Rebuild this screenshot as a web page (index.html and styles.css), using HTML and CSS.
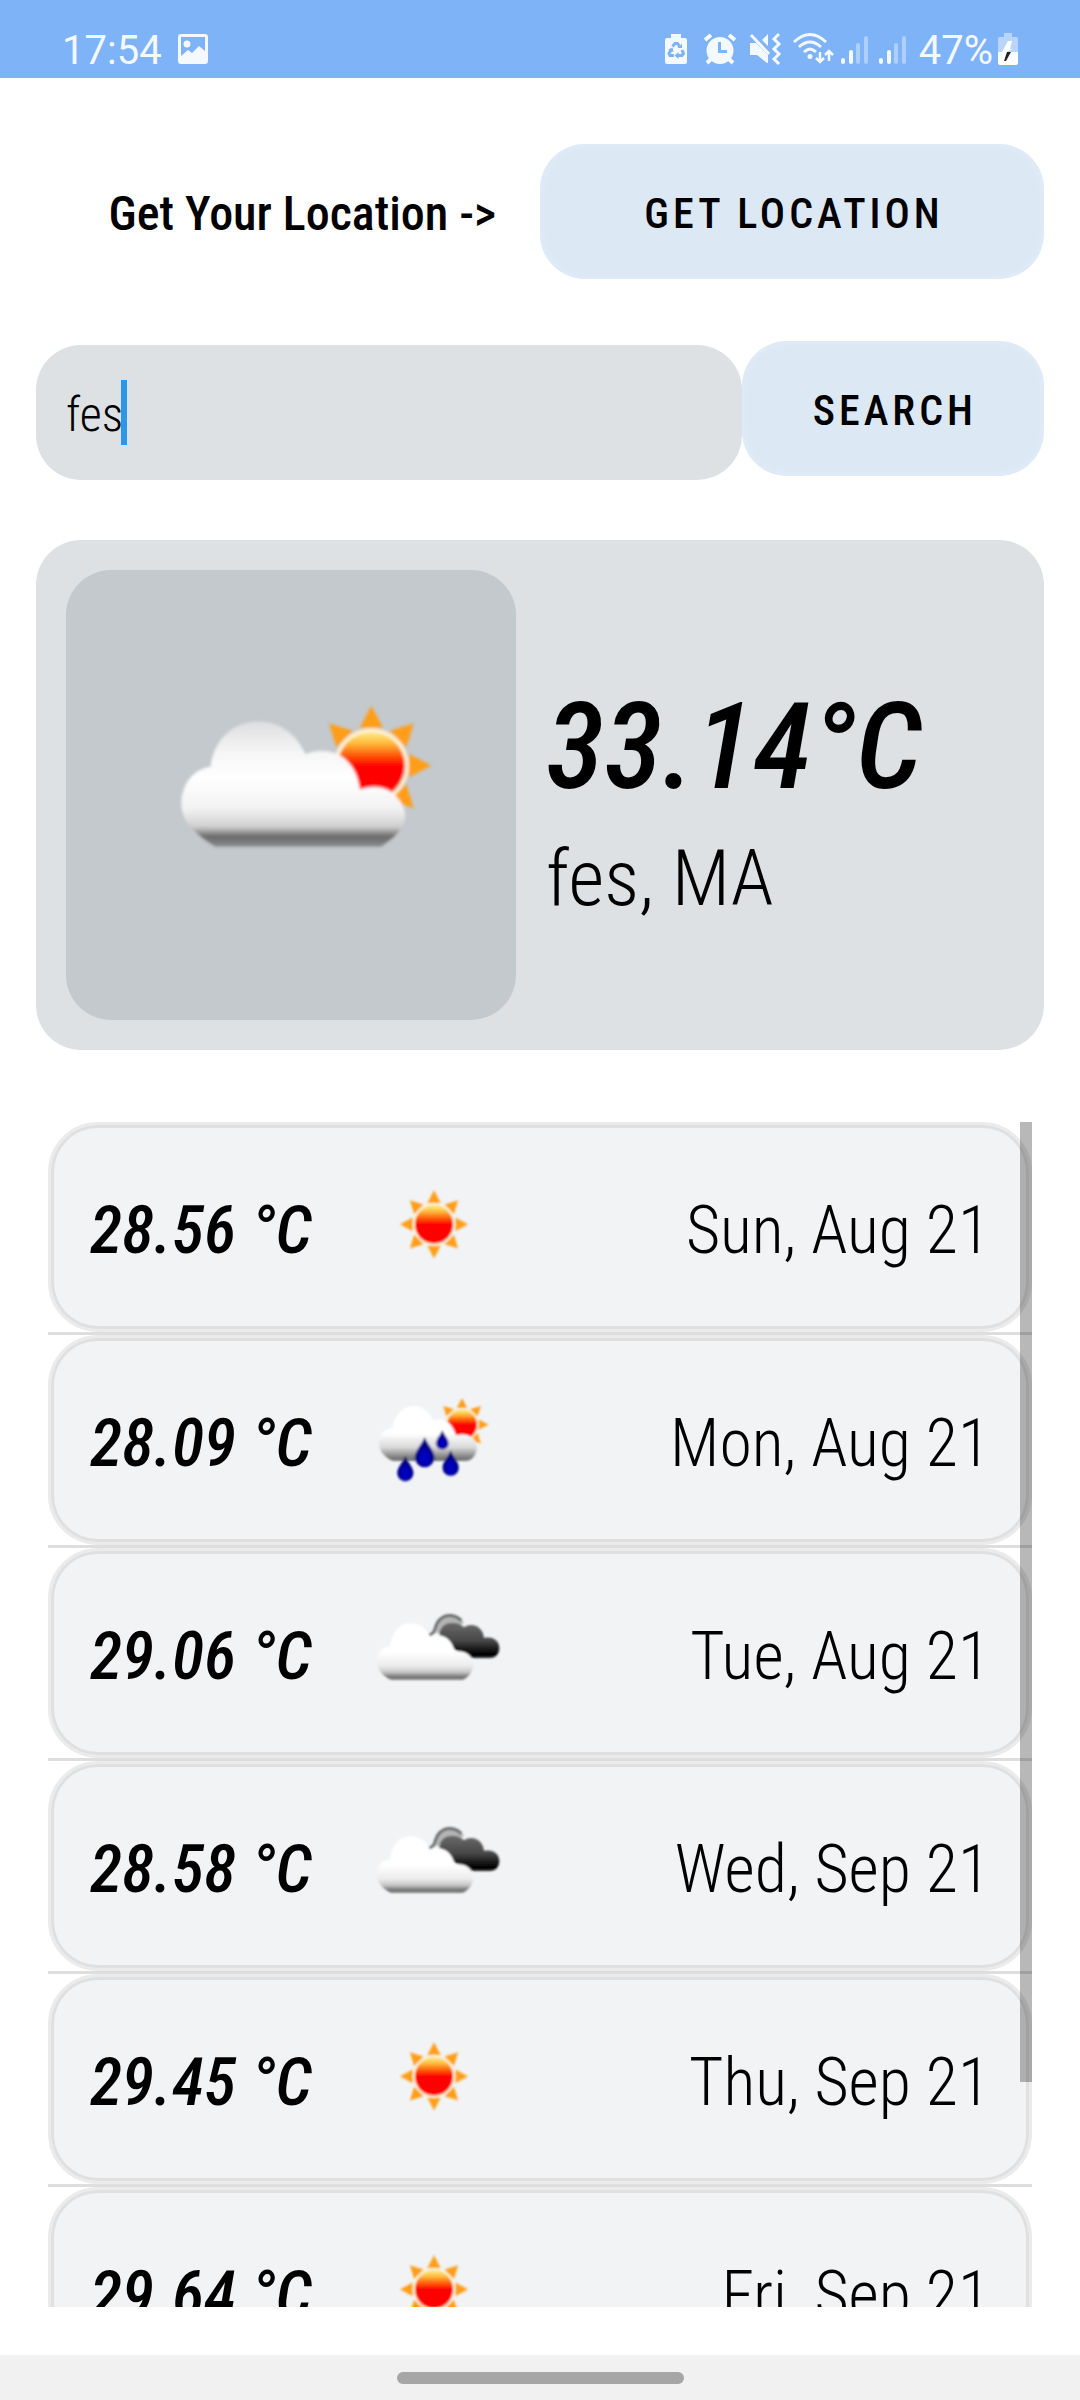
FILE: index.html
```html
<!DOCTYPE html>
<html lang="en">
<head>
<meta charset="utf-8">
<meta name="viewport" content="width=device-width, initial-scale=1">
<title>Weather</title>
<link rel="stylesheet" href="styles.css">
</head>
<body>
<svg class="defs" aria-hidden="true">
  <defs>
    <linearGradient id="disc" x1="0" y1="0" x2="0" y2="1">
      <stop offset="0" stop-color="#ffe98a"/><stop offset=".15" stop-color="#ffc040"/><stop offset=".38" stop-color="#ff4800"/><stop offset=".5" stop-color="#f00"/><stop offset="1" stop-color="#f00"/>
    </linearGradient>
    <linearGradient id="cloud" x1="0" y1="0" x2="0" y2="1">
      <stop offset="0" stop-color="#dedee0"/><stop offset=".25" stop-color="#f6f6f6"/><stop offset=".45" stop-color="#fff"/><stop offset=".7" stop-color="#f2f2f2"/><stop offset=".84" stop-color="#cfcfcf"/><stop offset=".92" stop-color="#6a6a6a"/><stop offset="1" stop-color="#8c8c8c"/>
    </linearGradient>
    <linearGradient id="small-cloud" x1="0" y1="0" x2="0" y2="1">
      <stop offset="0" stop-color="#fff"/><stop offset=".5" stop-color="#fff"/><stop offset=".75" stop-color="#dadada"/><stop offset=".95" stop-color="#777"/><stop offset="1" stop-color="#777"/>
    </linearGradient>
    <linearGradient id="pale-cloud" x1="0" y1="0" x2="0" y2="1">
      <stop offset="0" stop-color="#fff"/><stop offset=".5" stop-color="#fff"/><stop offset=".75" stop-color="#ececec"/><stop offset=".86" stop-color="#c8c8c8"/><stop offset=".95" stop-color="#707070"/><stop offset="1" stop-color="#8c8c8c"/>
    </linearGradient>
    <linearGradient id="dark" x1="0" y1="0" x2="0" y2="1">
      <stop offset="0" stop-color="#6a6a6a"/><stop offset=".5" stop-color="#484848"/><stop offset=".9" stop-color="#000"/><stop offset="1" stop-color="#222"/>
    </linearGradient>
    <radialGradient id="rain" cx=".5" cy=".7" r=".6">
      <stop offset="0" stop-color="#0000d8"/><stop offset="1" stop-color="#00006a"/>
    </radialGradient>
    <filter id="soft"><feGaussianBlur stdDeviation="3"/></filter>
    <filter id="softer"><feGaussianBlur stdDeviation="5"/></filter>
    <g id="sun">
      <g fill="#ff9d14">
        <path id="ray" d="M-20-64L0-102L20-64Z"/>
        <use href="#ray" transform="rotate(45)"/><use href="#ray" transform="rotate(90)"/><use href="#ray" transform="rotate(135)"/><use href="#ray" transform="rotate(180)"/><use href="#ray" transform="rotate(225)"/><use href="#ray" transform="rotate(270)"/><use href="#ray" transform="rotate(315)"/>
      </g>
      <circle r="64" fill="#fff0cf"/>
      <circle r="57" fill="url(#disc)"/>
    </g>
    <path id="drop" fill="url(#rain)" d="M0-46C8-22 29-6 29 16A29 29 0 0 1-29 16C-29-6-8-22 0-46Z"/>
    <symbol id="clear" viewBox="0 0 150 150">
      <g transform="translate(-9 18) scale(.3333)" filter="url(#soft)"><use href="#sun" x="252" y="163"/></g>
    </symbol>
    <symbol id="shower" viewBox="0 0 150 150">
      <g transform="translate(-9 -195) scale(.3333)" filter="url(#soft)">
        <use href="#sun" transform="translate(336 764) scale(.78)"/>
        <path fill="url(#small-cloud)" d="M128 873C102 862 85 840 87 815C89 792 104 778 126 775C136 728 164 708 190 708C217 708 238 726 250 752C276 740 306 752 318 796C345 786 378 800 380 828C382 850 368 873 346 873Z"/>
        <use href="#drop" transform="translate(224 847)"/>
        <use href="#drop" transform="translate(277 810) scale(.64)"/>
        <use href="#drop" transform="translate(166 896) scale(.84)"/>
        <use href="#drop" transform="translate(302 880) scale(.84)"/>
      </g>
    </symbol>
    <symbol id="broken" viewBox="0 0 150 150">
      <g transform="translate(-9 2) scale(.3333)" filter="url(#soft)">
        <path fill="#b4b4b4" d="M258 160C258 126 282 106 302 106C320 106 334 114 342 130L300 150Z"/>
        <path fill="none" stroke="#6c6c6c" stroke-width="9" d="M236 166C262 160 250 136 270 118C288 102 314 102 334 122"/>
        <path fill="url(#dark)" d="M268 168C268 140 286 128 306 128C320 128 332 132 342 142C368 124 400 142 402 174C428 168 448 182 448 204C448 222 436 234 420 234H360L300 200Z"/>
        <path fill="url(#pale-cloud)" d="M124 300C98 288 80 268 80 242C80 218 98 200 120 200C126 150 152 130 182 130C210 130 230 146 240 170C276 156 308 176 314 216C340 208 368 224 370 252C370 272 358 290 338 300Z"/>
      </g>
    </symbol>
  </defs>
</svg>

<header class="status">
  <span>17:54</span>
  <svg class="picture" width="30" height="30" viewBox="0 0 30 30" fill="#f4f9ff"><path fill-rule="evenodd" d="M3 0H27Q30 0 30 3V27Q30 30 27 30H3Q0 30 0 27V3Q0 0 3 0ZM3 3V22L10 16L14 19L21 12L27 17V3ZM9 6.500A3.500 3.500 0 1 1 9 13.500A3.500 3.500 0 1 1 9 6.500Z"/></svg>
  <div class="tray">
    <svg width="30" height="32" viewBox="0 0 30 32"><path fill="#f4f9ff" d="M9 1H19V5H23Q25 5 25 7V29Q25 31 23 31H5Q3 31 3 29V7Q3 5 5 5H9Z"/><g fill="none" stroke="#7fb3f8" stroke-width="3"><path d="M10.500 13.500L13 10.500H15.500L18 14M20 17L21.500 20.500L20 22.500H15.500M12 22.500H8L7 20.500L9.500 16"/></g><path fill="#7fb3f8" d="M15.500 15H20V10.500ZM16.500 19V26L12.500 22.500ZM6 17L10.500 14.500L11.500 19Z"/></svg>
    <svg width="40" height="32" viewBox="0 0 40 32"><circle cx="20" cy="17.500" r="13.500" fill="#f4f9ff"/><g fill="none" stroke="#f4f9ff" stroke-width="4"><path d="M5 7L11 2M35 7L29 2M11 26L7 30M29 26L33 30"/></g><path d="M19.500 9V18.500H27" fill="none" stroke="#7fb3f8" stroke-width="3"/></svg>
    <svg width="36" height="32" viewBox="0 0 36 32"><path fill="#f4f9ff" d="M2 10H8L20 22V30L19 30L9 22H2ZM14 7L20 1V13Z"/><g fill="none" stroke="#f4f9ff" stroke-width="3"><path d="M3 2L21 21"/><path d="M31 1L26 6L31 11L26 16L31 21L26 26L31 31"/></g></svg>
    <svg width="40" height="32" viewBox="0 0 40 32"><g fill="none" stroke="#f4f9ff" stroke-width="3"><path d="M2 9Q18-6 34 9M7 14Q18 4 29 14M12 19Q18 13 24 19"/><path stroke-width="2.500" d="M28 19V29M24 25L28 29L32 25M37 28V18M33 22L37 18L41 22"/></g><circle cx="18" cy="23.500" r="2.500" fill="#f4f9ff"/></svg>
    <svg width="30" height="32" viewBox="0 0 30 32"><g stroke="#f4f9ff" stroke-width="4" stroke-linecap="round"><path d="M3 27V29M11 19V29"/><path opacity=".4" d="M18 12V29M26 5V29"/></g></svg>
    <svg width="30" height="32" viewBox="0 0 30 32"><g stroke="#f4f9ff" stroke-width="4" stroke-linecap="round"><path d="M3 27V29M11 19V29"/><path opacity=".4" d="M18 12V29M26 5V29"/></g></svg>
    <span>47%</span>
    <svg class="battery" width="20" height="32" viewBox="0 0 20 32"><path fill="#b9d5fb" d="M6 0H14V4H18Q20 4 20 6V19H0V6Q0 4 2 4H6Z"/><path fill="#fff" d="M0 19H20V30Q20 32 18 32H2Q0 32 0 30Z"/><path fill="#fff" d="M10 8L4 19H9L12 17H16L12 16L14 8Z"/><path fill="#222" d="M9 19H13L8 28H6Z"/></svg>
  </div>
</header>

<main class="app">
  <section class="locate">
    <span class="prompt">Get Your Location -&gt;</span>
    <button class="btn" type="button">GET LOCATION</button>
  </section>

  <form class="search">
    <div class="field">
      <input type="text" aria-label="City" value="fes">
      <span class="caret"></span>
    </div>
    <button class="btn" type="button">SEARCH</button>
  </form>

  <section class="current">
    <div class="tile">
      <svg viewBox="0 0 450 450" role="img" aria-label="Few clouds">
        <g transform="translate(94 110) scale(.3333)" filter="url(#softer)">
          <use href="#sun" transform="translate(634 257) scale(1.76)"/>
          <path fill="url(#cloud)" d="M165 500C150 488 130 478 112 460C85 436 62 410 64 365C68 310 100 268 152 260C160 180 220 124 295 124C360 124 412 166 436 222C472 208 512 210 540 226C576 246 594 286 600 328C640 312 680 320 702 342C724 362 738 390 736 416C732 436 716 458 700 472L664 500Z"/>
        </g>
      </svg>
    </div>
    <div class="reading">
      <strong class="degrees">33.14°C</strong>
      <span class="city">fes, MA</span>
    </div>
  </section>

  <section class="forecast">
    <ul class="days">
      <li class="day"><strong>28.56 °C</strong><svg><use href="#clear"/></svg><span>Sun, Aug 21</span></li>
      <li class="day"><strong>28.09 °C</strong><svg><use href="#shower"/></svg><span>Mon, Aug 21</span></li>
      <li class="day"><strong>29.06 °C</strong><svg><use href="#broken"/></svg><span>Tue, Aug 21</span></li>
      <li class="day"><strong>28.58 °C</strong><svg><use href="#broken"/></svg><span>Wed, Sep 21</span></li>
      <li class="day"><strong>29.45 °C</strong><svg><use href="#clear"/></svg><span>Thu, Sep 21</span></li>
      <li class="day"><strong>29.64 °C</strong><svg><use href="#clear"/></svg><span>Fri, Sep 21</span></li>
    </ul>
    <div class="thumb"></div>
  </section>
</main>

<footer class="nav"><div class="pill"></div></footer>
</body>
</html>
```

FILE: styles.css
```css
* { box-sizing: border-box; }

body {
  margin: 0;
  height: 100vh;
  display: flex;
  flex-direction: column;
  background: #fff;
  color: #000;
  font-family: "Roboto Condensed", "Liberation Sans Narrow", Roboto, sans-serif;
}

.defs { position: absolute; width: 0; height: 0; }

.status {
  flex: none;
  display: flex;
  align-items: center;
  gap: 16px;
  height: 78px;
  padding: 20px 62px 0;
  background: #7fb3f8;
  color: #f4f9ff;
  font: 400 40px/48px Roboto, sans-serif;
}
.status span { padding-top: 4px; }
.status svg { display: block; overflow: visible; }
.tray { display: flex; align-items: center; gap: 8px; margin-left: auto; }
.tray span { margin: 0 -3px 0 3px; }

.app {
  flex: 1;
  min-height: 0;
  display: flex;
  flex-direction: column;
  padding: 66px 36px 48px;
}

.btn {
  height: 135px;
  padding: 4px 0 0 4px;
  border: 0;
  border-radius: 45px;
  background: #dce8f4;
  box-shadow: inset 0 0 10px #e2eefa;
  color: #000;
  font: inherit;
  font-size: 42px;
  font-weight: 500;
  letter-spacing: 4px;
}

.locate { display: grid; grid-template-columns: 1fr 1fr; align-items: center; }
.prompt { justify-self: end; margin-right: 44px; padding-top: 4px; font-size: 48px; font-weight: 500; }

.search { display: grid; grid-template-columns: 7fr 3fr; align-items: start; margin-top: 62px; }
.field { position: relative; margin-top: 4px; }
.field input {
  display: block;
  width: 100%;
  height: 135px;
  padding: 4px 30px 0;
  border: 0;
  border-radius: 45px;
  outline: 0;
  background: #dde1e4;
  color: #000;
  font: inherit;
  font-size: 48px;
  font-weight: 300;
}
.caret { position: absolute; left: 85px; top: 35px; width: 6px; height: 65px; background: #2c96e8; }

.current {
  display: flex;
  align-items: center;
  gap: 30px;
  margin-top: 60px;
  padding: 30px;
  border-radius: 45px;
  background: #dde1e4;
}
.tile { flex: none; width: 450px; border-radius: 45px; background: #c4c9cd; }
.tile svg { display: block; width: 100%; }
.reading { display: flex; flex-direction: column; gap: 16px; padding-top: 12px; }
.degrees { font-size: 120px; line-height: 140px; font-weight: 500; font-style: italic; }
.city { font-size: 78px; line-height: 92px; font-weight: 300; }

.forecast { position: relative; flex: 1; min-height: 0; margin: 72px 12px 0; }
.days { height: 100%; margin: 0; padding: 0; overflow: hidden; list-style: none; }
.day {
  position: relative;
  display: flex;
  align-items: center;
  height: 210px;
  margin-bottom: 3px;
  padding: 0 39px;
  border: 3px solid #ebebeb;
  border-radius: 50px;
  background: #f1f3f5;
  box-shadow: inset 0 0 0 3px #e0e0e0;
  font-size: 66px;
}
.day::after { content: ""; position: absolute; left: -3px; right: -3px; bottom: -6px; height: 3px; background: #dedede; }
.day strong { width: 269px; padding-top: 6px; font-weight: 500; font-style: italic; }
.day svg { flex: none; width: 150px; height: 150px; }
.day span { margin-left: auto; padding-top: 6px; font-weight: 300; }
.thumb { position: absolute; right: 0; top: 0; width: 12px; height: 81%; background: rgba(0, 0, 0, .28); }

.nav { flex: none; display: flex; align-items: center; justify-content: center; height: 45px; background: #f1f1f1; }
.pill { width: 287px; height: 12px; border-radius: 6px; background: #a6a6a6; }
```
